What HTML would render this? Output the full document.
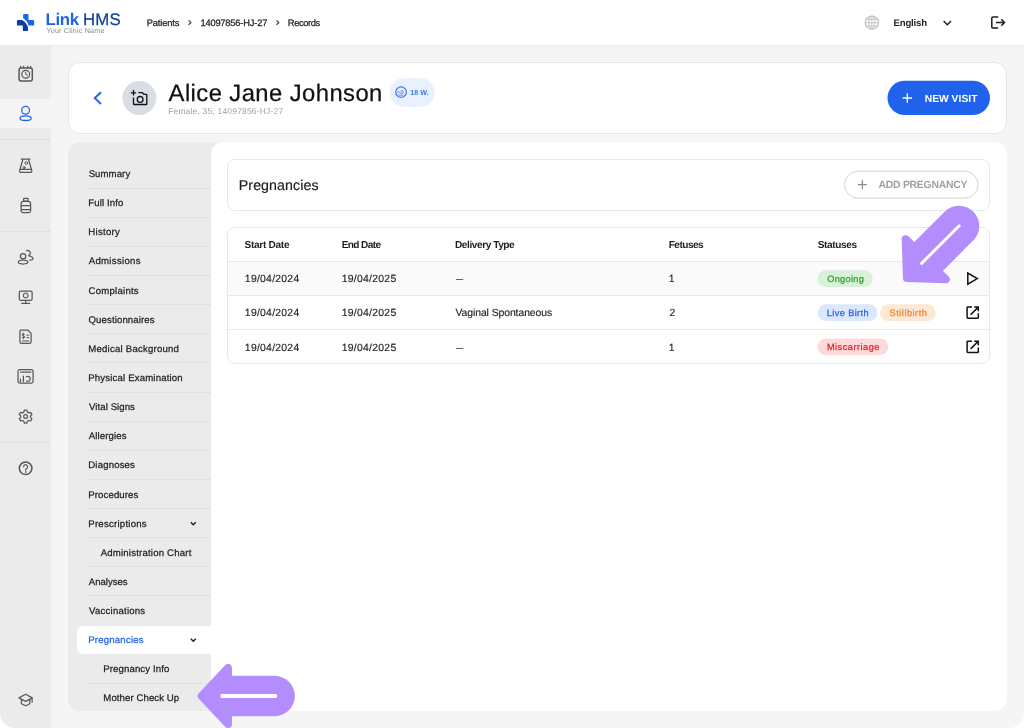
<!DOCTYPE html>
<html lang="en">
<head>
<meta charset="utf-8">
<title>Link HMS - Records</title>
<style>
*{box-sizing:border-box;margin:0;padding:0}
html,body{width:1024px;height:728px;overflow:hidden}
body{background:#f5f5f5;font-family:"Liberation Sans",sans-serif;color:#1f1f1f;position:relative}
.abs{position:absolute}
.t{position:absolute;white-space:nowrap;line-height:1;text-rendering:geometricPrecision}
/* top bar */
#topbar{left:0;top:0;width:1024px;height:45px;background:#fff;box-shadow:0 1px 2px rgba(0,0,0,.05)}
/* sidebar */
#sidebar{left:0;top:45px;width:51px;height:683px;background:#ebebeb}
#sidebar .act{left:0;top:54px;width:51px;height:29px;background:#f5f5f5}
#sidebar .div{left:0;width:51px;height:1px;background:#e0e0e0}
/* header card */
#hcard{left:68px;top:62px;width:939px;height:72px;background:#fff;border:1px solid #e3e8ee;border-radius:12px}
/* lower */
#lower{left:68px;top:142px;width:939px;height:569px;background:#ebebeb;border-radius:12px}
#content{left:211px;top:142px;width:796px;height:569px;background:#fff;border-radius:12px}
.ndiv{position:absolute;left:88px;width:123px;height:1px;background:#e0e0e0}
#navact{left:77px;top:626px;width:134px;height:28px;background:#fff;border-radius:6px 0 0 6px}
/* cards */
#pcard{left:227px;top:159px;width:763px;height:52px;background:#fff;border:1px solid #e3e8ee;border-radius:8px}
#tcard{left:227px;top:227px;width:763px;height:137px;background:#fff;border:1px solid #e3e8ee;border-radius:8px;overflow:hidden}
.row{position:absolute;left:0;width:761px;height:1px;background:#e4e9ef}
</style>
</head>
<body>
<div id="topbar" class="abs"></div>
<div id="sidebar" class="abs">
  <div class="abs act"></div>
  <div class="abs div" style="top:94px"></div>
  <div class="abs div" style="top:186px"></div>
  <div class="abs div" style="top:397px"></div>
</div>
<div id="hcard" class="abs"></div>
<div id="lower" class="abs"></div>
<!--NDIV-->
<div class="ndiv" style="top:188px"></div>
<div class="ndiv" style="top:217px"></div>
<div class="ndiv" style="top:246px"></div>
<div class="ndiv" style="top:275px"></div>
<div class="ndiv" style="top:304px"></div>
<div class="ndiv" style="top:333px"></div>
<div class="ndiv" style="top:362px"></div>
<div class="ndiv" style="top:392px"></div>
<div class="ndiv" style="top:421px"></div>
<div class="ndiv" style="top:450px"></div>
<div class="ndiv" style="top:479px"></div>
<div class="ndiv" style="top:508px"></div>
<div class="ndiv" style="top:537px"></div>
<div class="ndiv" style="top:566px"></div>
<div class="ndiv" style="top:595px"></div>
<div class="ndiv" style="top:683px"></div>
<!--/NDIV-->
<div id="content" class="abs"></div>
<div id="navact" class="abs"></div>
<div id="pcard" class="abs"></div>
<div id="tcard" class="abs">
  <div class="abs" style="left:0;top:34px;width:761px;height:34px;background:#fafafa"></div>
  <div class="row" style="top:33px"></div>
  <div class="row" style="top:67px"></div>
  <div class="row" style="top:101px"></div>
</div>
<div id="cbl" class="abs" style="left:0;top:713px;width:15px;height:15px;background:radial-gradient(circle at 100% 0,rgba(255,255,255,0) 14.5px,#fff 15.5px)"></div>
<div id="cbr" class="abs" style="left:1009px;top:713px;width:15px;height:15px;background:radial-gradient(circle at 0 0,rgba(255,255,255,0) 14.5px,#fff 15.5px)"></div>
<!--ICONS-->
<svg class="abs" style="left:0;top:0" width="1024" height="728" viewBox="0 0 1024 728" fill="none" stroke-linecap="round" stroke-linejoin="round">
<!-- logo -->
<path d="M24.3 14h3a1.2 1.2 0 0 1 1.2 1.2v4.7h4.5a1.2 1.2 0 0 1 1.2 1.2v3.3a1.2 1.2 0 0 1-1.2 1.2h-4.6c-.3-2.6-2.2-5.600-5.300-7.600v-2.800a1.200 1.200 0 0 1 1.200-1.200z" fill="#1d63ed"/>
<path d="M18.100 19.900h3.900c3.300 1.800 5.600 4.800 6.100 8.200v1.800a1.200 1.200 0 0 1-1.200 1.200h-2.900a1.200 1.200 0 0 1-1.200-1.200v-4.300h-4.700a1.200 1.200 0 0 1-1.200-1.200v-3.300a1.200 1.200 0 0 1 1.200-1.200z" fill="#0b3ba3"/>
<!-- breadcrumb chevrons -->
<g stroke="#333" stroke-width="1.1"><path d="M188.900 20.700l2.100 1.900-2.100 1.900"/><path d="M276.800 20.700l2.100 1.900-2.100 1.900"/></g>
<!-- globe -->
<g stroke="#c4c4c4" stroke-width="1"><circle cx="871.900" cy="22.700" r="6.600" stroke-width="1.300"/><ellipse cx="871.900" cy="22.700" rx="3" ry="6.700"/><path d="M865.200 22.700h13.400M871.900 16v13.400M866.200 19.300h11.400M866.200 26.100h11.400"/></g>
<!-- chevron down -->
<path d="M943.600 21l3.700 3.700 3.700-3.700" stroke="#1f1f1f" stroke-width="1.500" stroke-linecap="butt" stroke-linejoin="miter"/>
<!-- logout -->
<g stroke="#1f1f1f" stroke-width="1.500" stroke-linecap="butt"><path d="M998.200 16.900h-5.200a1.200 1.200 0 0 0-1.200 1.200v8.800a1.200 1.200 0 0 0 1.200 1.200h5.200"/><path d="M996 22.500h8.300M1001.300 19.300l3.200 3.200-3.200 3.200" stroke-linejoin="miter"/></g>
<!-- sidebar icons -->
<g stroke="#585858" stroke-width="1.250">
 <!-- calendar clock -->
 <rect x="19.100" y="68.100" width="13.200" height="12.800" rx="2" stroke-width="1.500"/><path d="M20.600 66.300v1.500M23.600 66.300v1.500M27.600 66.300v1.500M30.600 66.300v1.500"/><circle cx="25.700" cy="74.300" r="3.900"/><path d="M25.700 72.200v2.100l1.700.9" stroke-width="1"/>
 <!-- flask -->
 <path d="M21.300 159.200h8.600M22.900 159.400l-3.300 11.100a1.300 1.300 0 0 0 1.200 1.800h9.800a1.300 1.300 0 0 0 1.200-1.800l-3.300-11.100M20.300 169.300h10.800"/><circle cx="26.300" cy="163" r="1.400" stroke-width="1"/><circle cx="24.100" cy="167.600" r="1.100" stroke-width="1"/>
 <!-- bottle -->
 <rect x="23.600" y="198.400" width="4.500" height="2.600" rx=".8"/><path d="M23.500 201.400h4.700c1.400 0 2.400 1 2.400 2.400v7c0 1-.8 1.800-1.800 1.800h-5.900c-1 0-1.800-.8-1.800-1.800v-7c0-1.400 1-2.400 2.400-2.400zM21.300 205.600h9.200M21.300 209.700h9.200"/>
 <!-- people -->
 <circle cx="23.100" cy="256.200" r="2.700"/><ellipse cx="23.100" cy="262.100" rx="4.800" ry="1.900"/><path d="M26.400 250.700a2.700 2.700 0 1 1 2.300 4.900c1.200.6 4.200.9 4.300 2.700.1 1.100-1.400 1.700-3.100 1.900"/>
 <!-- monitor -->
 <rect x="19.300" y="291" width="12.800" height="9.300" rx="1.200"/><path d="M25.700 300.500v2.600M21.700 303.300h8"/><path d="M25.700 292.900l2.200 1.300v2.600l-2.200 1.300-2.200-1.300v-2.600z" stroke-width="1.100"/>
 <!-- invoice -->
 <path d="M21.500 330h6.200l3.400 3.400v8.400a1.600 1.600 0 0 1-1.600 1.600h-8a1.600 1.600 0 0 1-1.600-1.600v-10.200a1.600 1.600 0 0 1 1.600-1.600z"/><path d="M22.300 341h6.500M26.800 335.200h2M26.800 337.600h2" stroke-width="1"/><path d="M24.700 334.400c-.3-.5-.8-.7-1.300-.7-.8 0-1.400.4-1.400 1.100 0 1.500 2.800.7 2.800 2.200 0 .7-.6 1.100-1.400 1.100-.6 0-1.200-.3-1.500-.8M23.400 332.900v6" stroke-width=".9"/>
 <!-- chart -->
 <rect x="18" y="369.700" width="15.100" height="13.400" rx="1.800"/><path d="M20.600 372.100h10.200M20.400 379.200v2.300M23.400 376v5.500"/><path d="M26.600 376.600a2.500 2.500 0 1 1 0 4.400"/>
 <!-- gear -->
 <path d="M24.300 410.200h2.600l.5 1.900 1.300.75 1.900-.55 1.300 2.250-1.400 1.350v1.500l1.400 1.350-1.300 2.250-1.900-.55-1.300.75-.5 1.900h-2.600l-.5-1.900-1.300-.75-1.900.55-1.300-2.250 1.400-1.350v-1.500l-1.400-1.350 1.300-2.250 1.900.55 1.300-.75z"/><circle cx="25.600" cy="416.500" r="1.900"/>
 <!-- help -->
 <circle cx="25.600" cy="468.300" r="6.300" stroke-width="1.500"/><path d="M23.600 466.700a2 2 0 1 1 3.100 1.700c-.7.500-1.100.9-1.100 1.800"/><circle cx="25.600" cy="472" r=".5" fill="#585858" stroke-width=".5"/>
 <!-- grad cap -->
 <path d="M25.600 694.200l6.700 3.700-6.700 3.500-6.700-3.500zM21.400 699.600v4.100l4.200 2 4.200-2v-4.100M32.100 698.200v4" stroke-width="1.200"/>
</g>
<!-- person (active) -->
<g stroke="#2563eb" stroke-width="1.300"><circle cx="25.600" cy="110.300" r="3.900"/><ellipse cx="25.600" cy="118.200" rx="5.600" ry="2.300"/></g>
<!-- back chevron -->
<path d="M101 92.200l-6.200 5.900 6.200 5.900" stroke="#2563eb" stroke-width="2" stroke-linecap="butt" stroke-linejoin="miter"/>
<!-- avatar -->
<circle cx="139.350" cy="97.950" r="17" fill="#d9dee5"/>
<g stroke="#111" stroke-width="1.300" stroke-linecap="butt"><path d="M133.500 90.100v5.400M130.800 92.800h5.400"/><path d="M133.500 97.400v6.500a.6.600 0 0 0 .6.600h12.100a.6.600 0 0 0 .6-.6v-8.900a.6.600 0 0 0-.6-.6h-2l-2.100-1.800h-3.700"/><circle cx="140.100" cy="99.400" r="2.900"/></g>
<!-- weeks badge -->
<rect x="389.800" y="78" width="45" height="29" rx="14.500" fill="#eaf1fe"/>
<g stroke="#3b78f0" stroke-width="1.200"><circle cx="401.050" cy="92.200" r="5.300"/><path d="M397.300 92.500c.8-1 1.800-1 2.300 0 .4 1.700 2.600 1.900 3.300.5.500-1 .3-2.300-.7-2.500-1-.2-1.500.8-1 1.500M398.300 94.600c1.500 1.800 4 1.800 5.400 0" stroke-width=".9"/></g>
<!-- new visit -->
<rect x="887.500" y="80.800" width="102.500" height="34.300" rx="17.150" fill="#2062ec"/>
<path d="M902.600 98h9.400M907.300 93.300v9.400" stroke="#fff" stroke-width="1.300" stroke-linecap="butt"/>
<!-- add pregnancy -->
<rect x="844.500" y="171.200" width="133.500" height="27" rx="13.500" fill="#fff" stroke="#d4d4d4" stroke-width="1"/>
<path d="M857.900 184.700h9M862.400 180.200v9" stroke="#8e8e8e" stroke-width="1.300" stroke-linecap="butt"/>
<!-- nav chevrons -->
<g stroke="#1f1f1f" stroke-width="1.400" stroke-linecap="butt" stroke-linejoin="miter"><path d="M190.800 522.300l2.500 2.500 2.500-2.500"/><path d="M190.800 638.800l2.500 2.500 2.500-2.500"/></g>
<!-- badges -->
<rect x="817.600" y="270.200" width="55.100" height="16.800" rx="8.400" fill="#d9f0d9"/>
<rect x="817.600" y="304.300" width="59.900" height="16.800" rx="8.400" fill="#dbe7fd"/>
<rect x="880" y="304.300" width="55.700" height="16.800" rx="8.400" fill="#fde8d4"/>
<rect x="817.600" y="338.400" width="70.700" height="16.800" rx="8.400" fill="#fddada"/>
<!-- row icons -->
<g stroke="#111" stroke-width="1.500" stroke-linecap="butt" stroke-linejoin="miter">
<path d="M967.800 273.100v11l9.500-5.500z"/>
<path d="M972 307.100h-4.200a.7.700 0 0 0-.7.700v9.800a.7.700 0 0 0 .7.700h9.800a.7.700 0 0 0 .7-.7v-4.300M974.200 307.100h4.100v4.200M978 307.400l-7.400 7.400"/>
<path d="M972 341.200h-4.200a.7.700 0 0 0-.7.700v9.800a.7.700 0 0 0 .7.700h9.800a.7.700 0 0 0 .7-.7v-4.300M974.200 341.200h4.100v4.200M978 341.500l-7.400 7.400"/>
</g>
</svg>
<!--/ICONS-->
<div id="txt" class="abs" style="left:0;top:0;width:1024px;height:728px;will-change:transform">
<!--TEXT-->
<div class="t" style="left:45.58px;top:12px;font-size:16.8px;color:#1d63ed;font-weight:700;letter-spacing:-0.359px;">Link</div>
<div class="t" style="left:82.97px;top:12px;font-size:16.8px;color:#123f9f;letter-spacing:0.199px;-webkit-text-stroke:0.25px;">HMS</div>
<div class="t" style="left:46.41px;top:27px;font-size:7.2px;color:#8a8a8a;letter-spacing:0.187px;">Your Clinic Name</div>
<div class="t" style="left:146.78px;top:19px;font-size:9.3px;color:#222;letter-spacing:-0.143px;-webkit-text-stroke:0.25px;">Patients</div>
<div class="t" style="left:200.42px;top:19px;font-size:9.3px;color:#222;letter-spacing:-0.179px;-webkit-text-stroke:0.25px;">14097856-HJ-27</div>
<div class="t" style="left:287.82px;top:19px;font-size:9.3px;color:#222;letter-spacing:-0.385px;-webkit-text-stroke:0.25px;">Records</div>
<div class="t" style="left:893.59px;top:19px;font-size:9.6px;color:#1f1f1f;font-weight:700;letter-spacing:-0.193px;">English</div>
<div class="t" style="left:168.58px;top:82px;font-size:23.8px;color:#111;letter-spacing:0.431px;-webkit-text-stroke:0.25px;">Alice Jane Johnson</div>
<div class="t" style="left:168.13px;top:107px;font-size:8.4px;color:#9e9e9e;letter-spacing:0.240px;">Female, 35, 14097856-HJ-27</div>
<div class="t" style="left:410.23px;top:89px;font-size:7.2px;color:#3b78f0;font-weight:700;letter-spacing:0.009px;">18 W.</div>
<div class="t" style="left:924.70px;top:95px;font-size:10.3px;color:#fff;font-weight:700;letter-spacing:0.013px;">NEW VISIT</div>
<div class="t" style="left:88.65px;top:170px;font-size:9.6px;color:#1f1f1f;letter-spacing:0.082px;-webkit-text-stroke:0.25px;">Summary</div>
<div class="t" style="left:88.29px;top:199px;font-size:9.6px;color:#1f1f1f;letter-spacing:0.121px;-webkit-text-stroke:0.25px;">Full Info</div>
<div class="t" style="left:88.29px;top:228px;font-size:9.6px;color:#1f1f1f;letter-spacing:0.278px;-webkit-text-stroke:0.25px;">History</div>
<div class="t" style="left:88.79px;top:257px;font-size:9.6px;color:#1f1f1f;letter-spacing:0.288px;-webkit-text-stroke:0.25px;">Admissions</div>
<div class="t" style="left:88.47px;top:287px;font-size:9.6px;color:#1f1f1f;letter-spacing:0.246px;-webkit-text-stroke:0.25px;">Complaints</div>
<div class="t" style="left:88.55px;top:316px;font-size:9.6px;color:#1f1f1f;letter-spacing:0.114px;-webkit-text-stroke:0.25px;">Questionnaires</div>
<div class="t" style="left:88.30px;top:345px;font-size:9.6px;color:#1f1f1f;letter-spacing:0.218px;-webkit-text-stroke:0.25px;">Medical Background</div>
<div class="t" style="left:88.29px;top:374px;font-size:9.6px;color:#1f1f1f;letter-spacing:0.166px;-webkit-text-stroke:0.25px;">Physical Examination</div>
<div class="t" style="left:89.08px;top:403px;font-size:9.6px;color:#1f1f1f;letter-spacing:0.066px;-webkit-text-stroke:0.25px;">Vital Signs</div>
<div class="t" style="left:88.79px;top:432px;font-size:9.6px;color:#1f1f1f;letter-spacing:0.107px;-webkit-text-stroke:0.25px;">Allergies</div>
<div class="t" style="left:88.29px;top:461px;font-size:9.6px;color:#1f1f1f;letter-spacing:0.158px;-webkit-text-stroke:0.25px;">Diagnoses</div>
<div class="t" style="left:88.29px;top:491px;font-size:9.6px;color:#1f1f1f;letter-spacing:0.114px;-webkit-text-stroke:0.25px;">Procedures</div>
<div class="t" style="left:88.29px;top:520px;font-size:9.6px;color:#1f1f1f;letter-spacing:0.245px;-webkit-text-stroke:0.25px;">Prescriptions</div>
<div class="t" style="left:100.68px;top:549px;font-size:9.6px;color:#1f1f1f;letter-spacing:0.197px;-webkit-text-stroke:0.25px;">Administration Chart</div>
<div class="t" style="left:88.79px;top:578px;font-size:9.6px;color:#1f1f1f;letter-spacing:-0.006px;-webkit-text-stroke:0.25px;">Analyses</div>
<div class="t" style="left:89.08px;top:607px;font-size:9.6px;color:#1f1f1f;letter-spacing:0.217px;-webkit-text-stroke:0.25px;">Vaccinations</div>
<div class="t" style="left:88.29px;top:636px;font-size:9.6px;color:#2563eb;letter-spacing:0.191px;-webkit-text-stroke:0.25px;">Pregnancies</div>
<div class="t" style="left:103.29px;top:665px;font-size:9.6px;color:#1f1f1f;letter-spacing:0.115px;-webkit-text-stroke:0.25px;">Pregnancy Info</div>
<div class="t" style="left:103.30px;top:694px;font-size:9.6px;color:#1f1f1f;letter-spacing:0.090px;-webkit-text-stroke:0.25px;">Mother Check Up</div>
<div class="t" style="left:238.79px;top:179px;font-size:14.2px;color:#1f1f1f;letter-spacing:0.085px;-webkit-text-stroke:0.2px;">Pregnancies</div>
<div class="t" style="left:878.51px;top:181px;font-size:10.4px;color:#a0a0a0;font-weight:700;letter-spacing:-0.244px;">ADD PREGNANCY</div>
<div class="t" style="left:244.49px;top:241px;font-size:10.1px;color:#1f1f1f;font-weight:700;letter-spacing:-0.294px;">Start Date</div>
<div class="t" style="left:341.65px;top:241px;font-size:10.1px;color:#1f1f1f;font-weight:700;letter-spacing:-0.597px;">End Date</div>
<div class="t" style="left:455.02px;top:241px;font-size:10.1px;color:#1f1f1f;font-weight:700;letter-spacing:-0.435px;">Delivery Type</div>
<div class="t" style="left:668.65px;top:241px;font-size:10.1px;color:#1f1f1f;font-weight:700;letter-spacing:-0.516px;">Fetuses</div>
<div class="t" style="left:817.69px;top:241px;font-size:10.1px;color:#1f1f1f;font-weight:700;letter-spacing:-0.389px;">Statuses</div>
<div class="t" style="left:244.86px;top:275px;font-size:10.4px;color:#1f1f1f;letter-spacing:0.257px;-webkit-text-stroke:0.15px;">19/04/2024</div>
<div class="t" style="left:341.78px;top:275px;font-size:10.4px;color:#1f1f1f;letter-spacing:0.269px;-webkit-text-stroke:0.15px;">19/04/2025</div>
<div class="t" style="left:456.01px;top:275px;font-size:10.4px;color:#1f1f1f;-webkit-text-stroke:0.15px;transform:scaleX(1.22);transform-origin:0 50%;">–</div>
<div class="t" style="left:668.81px;top:275px;font-size:10.4px;color:#1f1f1f;-webkit-text-stroke:0.15px;">1</div>
<div class="t" style="left:244.86px;top:309px;font-size:10.4px;color:#1f1f1f;letter-spacing:0.257px;-webkit-text-stroke:0.15px;">19/04/2024</div>
<div class="t" style="left:341.78px;top:309px;font-size:10.4px;color:#1f1f1f;letter-spacing:0.269px;-webkit-text-stroke:0.15px;">19/04/2025</div>
<div class="t" style="left:455.46px;top:309px;font-size:10.4px;color:#1f1f1f;letter-spacing:-0.074px;-webkit-text-stroke:0.15px;">Vaginal Spontaneous</div>
<div class="t" style="left:669.45px;top:309px;font-size:10.4px;color:#1f1f1f;-webkit-text-stroke:0.15px;">2</div>
<div class="t" style="left:244.86px;top:344px;font-size:10.4px;color:#1f1f1f;letter-spacing:0.257px;-webkit-text-stroke:0.15px;">19/04/2024</div>
<div class="t" style="left:341.78px;top:344px;font-size:10.4px;color:#1f1f1f;letter-spacing:0.269px;-webkit-text-stroke:0.15px;">19/04/2025</div>
<div class="t" style="left:456.01px;top:344px;font-size:10.4px;color:#1f1f1f;-webkit-text-stroke:0.15px;transform:scaleX(1.22);transform-origin:0 50%;">–</div>
<div class="t" style="left:668.81px;top:344px;font-size:10.4px;color:#1f1f1f;-webkit-text-stroke:0.15px;">1</div>
<div class="t" style="left:827.22px;top:275px;font-size:9.2px;color:#2fa32f;letter-spacing:0.317px;-webkit-text-stroke:0.25px;">Ongoing</div>
<div class="t" style="left:826.85px;top:309px;font-size:9.2px;color:#2563eb;letter-spacing:0.378px;-webkit-text-stroke:0.25px;">Live Birth</div>
<div class="t" style="left:889.59px;top:309px;font-size:9.2px;color:#f0832a;letter-spacing:0.511px;-webkit-text-stroke:0.25px;">Stillbirth</div>
<div class="t" style="left:826.88px;top:343px;font-size:9.2px;color:#e8202a;letter-spacing:0.511px;-webkit-text-stroke:0.25px;">Miscarriage</div>
<!--/TEXT-->
</div>
<!--ARROWS-->
<svg class="abs" style="left:0;top:0" width="1024" height="728" viewBox="0 0 1024 728">
<g transform="translate(197.700 696)"><path d="M4 0L30.300-28.100V28.100z" fill="#b38dfd" stroke="#b38dfd" stroke-width="8" stroke-linejoin="round"/><path d="M33-20.150H76.950a20.150 20.150 0 0 1 0 40.300H33z" fill="#b38dfd"/><path d="M24.500 0H77.600" stroke="#fff" stroke-width="4" stroke-linecap="round"/></g>
<g transform="translate(904.140 280.850) rotate(-45) scale(1.008)"><path d="M4 0L30.300-28.100V28.100z" fill="#b38dfd" stroke="#b38dfd" stroke-width="8" stroke-linejoin="round"/><path d="M33-20.150H76.950a20.150 20.150 0 0 1 0 40.300H33z" fill="#b38dfd"/><path d="M24.500 0H77.300" stroke="#fff" stroke-width="2.900" stroke-linecap="round"/></g>
</svg>
<!--/ARROWS-->
</body>
</html>
